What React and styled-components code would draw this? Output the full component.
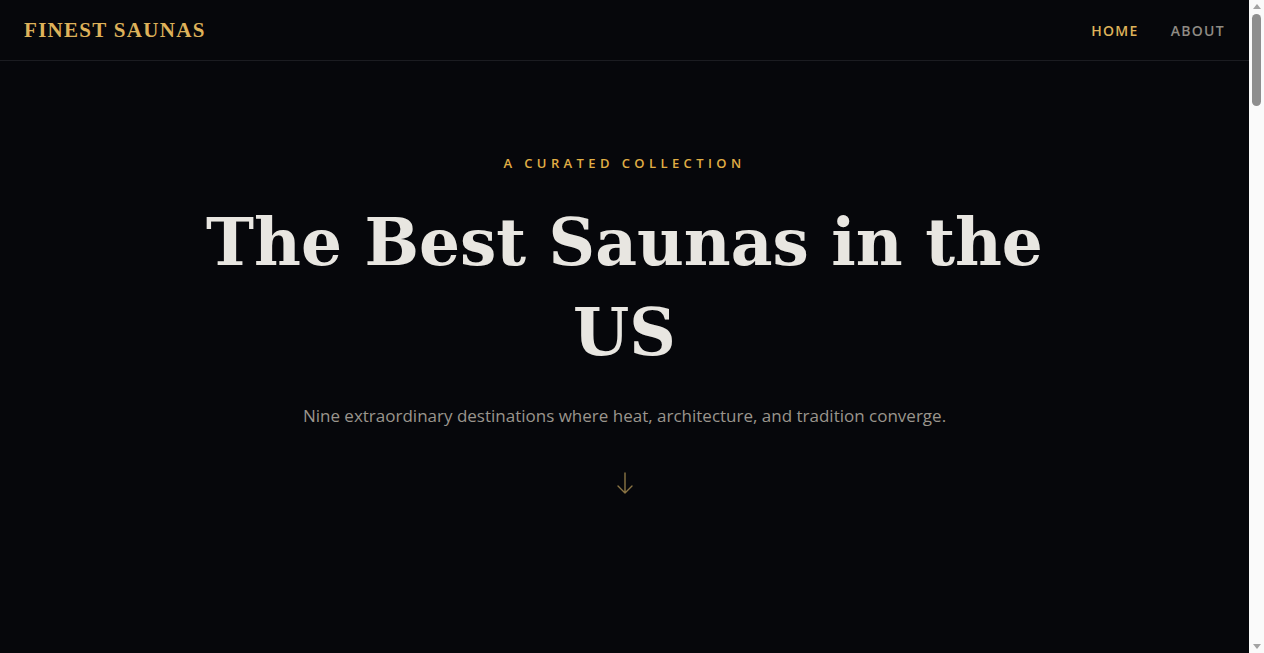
import React from "react";
import styled, { createGlobalStyle } from "styled-components";

const Global = createGlobalStyle`
  html { background: #fafafa; }
  body {
    margin: 0 15px 0 0;
    padding: 0;
    background: #06070b;
    font-family: "Open Sans", "Noto Sans", sans-serif;
    color: #e8e6e1;
  }
  * { box-sizing: border-box; }
`;

const Header = styled.header`
  height: 61px;
  display: flex;
  align-items: center;
  justify-content: space-between;
  padding: 0 24px;
  border-bottom: 1px solid #1b1c21;
`;

const Logo = styled.a`
  font-family: "Liberation Serif", Georgia, serif;
  font-weight: 700;
  font-size: 21px;
  color: #deb25a;
  text-decoration: none;
  letter-spacing: 1.3px;
`;

const Nav = styled.nav`
  display: flex;
  gap: 32px;
`;

const NavLink = styled.a`
  font-family: "Open Sans", sans-serif;
  font-weight: 600;
  font-size: 14px;
  letter-spacing: 1.3px;
  text-transform: uppercase;
  text-decoration: none;
  color: ${(p) => (p.$active ? "#deb25a" : "#8f8b84")};
`;

const Hero = styled.section`
  display: flex;
  flex-direction: column;
  align-items: center;
  text-align: center;
  padding: 93px 24px 0;
  min-height: 4300px;
`;

const Eyebrow = styled.p`
  margin: 0;
  font-weight: 600;
  font-size: 13px;
  line-height: 18px;
  letter-spacing: 4.4px;
  color: #e0ae45;
  text-transform: uppercase;
`;

const Title = styled.h1`
  margin: 25px 0 0;
  max-width: 900px;
  font-family: "DejaVu Serif", Georgia, serif;
  font-weight: 700;
  font-size: 64.5px;
  line-height: 90px;
  color: #e8e6e1;
`;

const Subtitle = styled.p`
  margin: 27px 0 0;
  font-size: 17px;
  line-height: 24px;
  color: #9a958d;
`;

const Arrow = styled.div`
  margin-top: 44px;
  color: #8a7444;
  display: flex;
`;

const Scrollbar = styled.div`
  position: fixed;
  top: 0;
  right: 0;
  width: 15px;
  height: 100vh;
  background: #fafafa;
  display: flex;
  flex-direction: column;
  align-items: center;
  justify-content: space-between;
  padding: 4px 0;
`;

const Thumb = styled.div`
  position: absolute;
  top: 14px;
  left: 3px;
  width: 9px;
  height: 92px;
  border-radius: 5px;
  background: #8e8e8e;
`;

export default function App() {
  return (
    <>
      <Global />
      <Header>
        <Logo href="#">FINEST SAUNAS</Logo>
        <Nav>
          <NavLink href="#" $active>Home</NavLink>
          <NavLink href="#">About</NavLink>
        </Nav>
      </Header>
      <Hero>
        <Eyebrow>A Curated Collection</Eyebrow>
        <Title>The Best Saunas in the US</Title>
        <Subtitle>
          Nine extraordinary destinations where heat, architecture, and tradition converge.
        </Subtitle>
        <Arrow>
          <svg width="18" height="22" viewBox="0 0 18 22" fill="none" stroke="currentColor" strokeWidth="1.4" strokeLinecap="round" strokeLinejoin="round">
            <path d="M9 1v20M2 14l7 7 7-7" />
          </svg>
        </Arrow>
      </Hero>
      <Scrollbar aria-hidden="true">
        <svg width="8" height="5" viewBox="0 0 8 5"><path d="M4 0L8 5H0z" fill="#a3a3a3" /></svg>
        <Thumb />
        <svg width="8" height="5" viewBox="0 0 8 5"><path d="M0 0h8L4 5z" fill="#a3a3a3" /></svg>
      </Scrollbar>
    </>
  );
}
